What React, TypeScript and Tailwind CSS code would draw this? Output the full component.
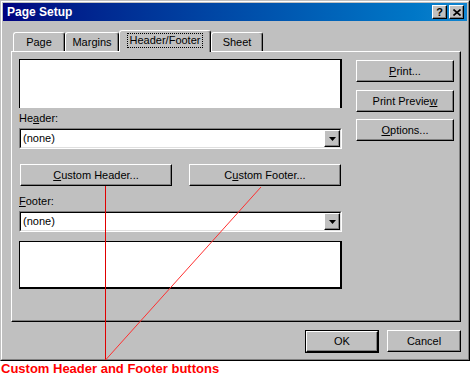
import React from "react";

const raised =
  "border-t border-l border-t-white border-l-white border-r border-b border-r-black border-b-black shadow-[inset_-1px_-1px_0_#808080]";

function Button({
  children,
  className = "",
}: {
  children: React.ReactNode;
  className?: string;
}) {
  return (
    <div
      className={`${raised} bg-[#c0c0c0] flex items-center justify-center text-black ${className}`}
    >
      {children}
    </div>
  );
}

function Combo() {
  return (
    <div className="h-[21px] w-[323px] border-t border-l border-t-[#808080] border-l-[#808080] border-r border-b border-r-white border-b-white">
      <div className="h-full border-t border-l border-t-black border-l-black border-r border-b border-r-[#dfdfdf] border-b-[#dfdfdf] bg-white flex items-center justify-between">
        <span className="pl-[2px]">(none)</span>
        <div className={`${raised} bg-[#c0c0c0] w-[16px] h-[17px] flex items-center justify-center`}>
          <svg width="7" height="4" viewBox="0 0 7 4">
            <path d="M0 0h7L3.5 4z" fill="#000" />
          </svg>
        </div>
      </div>
    </div>
  );
}

function Tab({
  label,
  width,
  selected,
}: {
  label: React.ReactNode;
  width: number;
  selected?: boolean;
}) {
  return (
    <div
      style={{ width }}
      className={`border-t border-l border-t-white border-l-white border-r border-r-black shadow-[inset_-1px_0_0_#808080] rounded-t-[3px] bg-[#c0c0c0] flex items-center justify-center ${
        selected ? "h-[22px] -mb-px relative z-10 pb-[2px]" : "h-[19px]"
      }`}
    >
      {label}
    </div>
  );
}

export default function App() {
  return (
    <div
      className="relative w-[471px] h-[376px] bg-white text-[11px] leading-[13px] text-black"
      style={{ fontFamily: '"Liberation Sans", Arial, sans-serif' }}
    >
      <div className="w-[470px] h-[361px] border border-t-[#c0c0c0] border-l-[#c0c0c0] border-r-black border-b-black bg-[#c0c0c0]">
        <div className="h-full border border-t-white border-l-white border-r-[#808080] border-b-[#808080] p-px flex flex-col">
          {/* title bar */}
          <div className="h-[18px] shrink-0 bg-gradient-to-r from-[#000080] to-[#1084d0] flex items-center justify-between pl-[4px] pr-[3px]">
            <span className="text-white font-bold text-[12px] leading-[14px]">
              Page Setup
            </span>
            <div className="flex gap-[2px]">
              <div className={`${raised} bg-[#c0c0c0] w-[15px] h-[14px] flex items-center justify-center font-bold text-[11px] leading-none`}>
                ?
              </div>
              <div className={`${raised} bg-[#c0c0c0] w-[15px] h-[14px] flex items-center justify-center`}>
                <svg width="8" height="7" viewBox="0 0 8 7">
                  <path d="M0.5 0.5L7.5 6.5M7.5 0.5L0.5 6.5" stroke="#000" strokeWidth="1.6" />
                </svg>
              </div>
            </div>
          </div>

          <div className="pl-[8px] pt-[9px]">
            {/* tabs */}
            <div className="flex items-end h-[21px] pl-[2px]">
              <Tab label="Page" width={52} />
              <Tab label="Margins" width={54} />
              <Tab
                label={
                  <span className="border border-dotted border-black px-[2px] leading-[13px]">
                    Header/Footer
                  </span>
                }
                width={92}
                selected
              />
              <Tab label="Sheet" width={52} />
            </div>

            {/* panel */}
            <div className="w-[450px] h-[271px] border-t border-l border-t-white border-l-white border-r border-b border-r-black border-b-black shadow-[inset_-1px_-1px_0_#808080] pl-[7px] pt-[7px] flex gap-[14px]">
              <div className="w-[323px] flex flex-col">
                <div className="h-[49px] bg-white border-t border-l border-t-black border-l-black border-r-2 border-r-black" />
                <div className="pt-[4px] mb-[3px]">
                  He<u>a</u>der:
                </div>
                <Combo />
                <div className="flex mt-[15px] pl-px gap-[17px]">
                  <Button className="w-[152px] h-[22px]">
                    <span>
                      <u>C</u>ustom Header...
                    </span>
                  </Button>
                  <Button className="w-[152px] h-[22px]">
                    <span>
                      C<u>u</u>stom Footer...
                    </span>
                  </Button>
                </div>
                <div className="pt-[9px] mb-[3px]">
                  <u>F</u>ooter:
                </div>
                <Combo />
                <div className="mt-[9px] h-[48px] bg-white border-t border-l border-t-black border-l-black border-r-2 border-b-2 border-r-black border-b-black" />
              </div>
              <div className="w-[98px] flex flex-col pt-px">
                <Button className="h-[22px]">
                  <span>
                    <u>P</u>rint...
                  </span>
                </Button>
                <Button className="h-[22px] mt-[8px]">
                  <span>
                    Print Previe<u>w</u>
                  </span>
                </Button>
                <Button className="h-[22px] mt-[7px]">
                  <span>
                    <u>O</u>ptions...
                  </span>
                </Button>
              </div>
            </div>

            {/* bottom buttons */}
            <div className="w-[450px] flex justify-end gap-[8px] mt-[8px]">
              <div className="w-[74px] h-[23px] border border-black">
                <Button className="w-full h-full">OK</Button>
              </div>
              <Button className="w-[74px] h-[22px]">Cancel</Button>
            </div>
          </div>
        </div>
      </div>

      <div
        className="text-[#ff0000] font-bold text-[13px] leading-[15px] pl-px"
        style={{ fontFamily: '"Liberation Sans", Arial, sans-serif' }}
      >
        Custom Header and Footer buttons
      </div>

      {/* annotation lines */}
      <svg
        className="absolute left-0 top-0 pointer-events-none"
        width="471"
        height="376"
        viewBox="0 0 471 376"
      >
        <line x1="105.5" y1="186" x2="105.5" y2="360" stroke="#e00000" strokeWidth="1" />
        <line x1="105.5" y1="360" x2="261" y2="187" stroke="#ff3030" strokeWidth="1" />
      </svg>
    </div>
  );
}
